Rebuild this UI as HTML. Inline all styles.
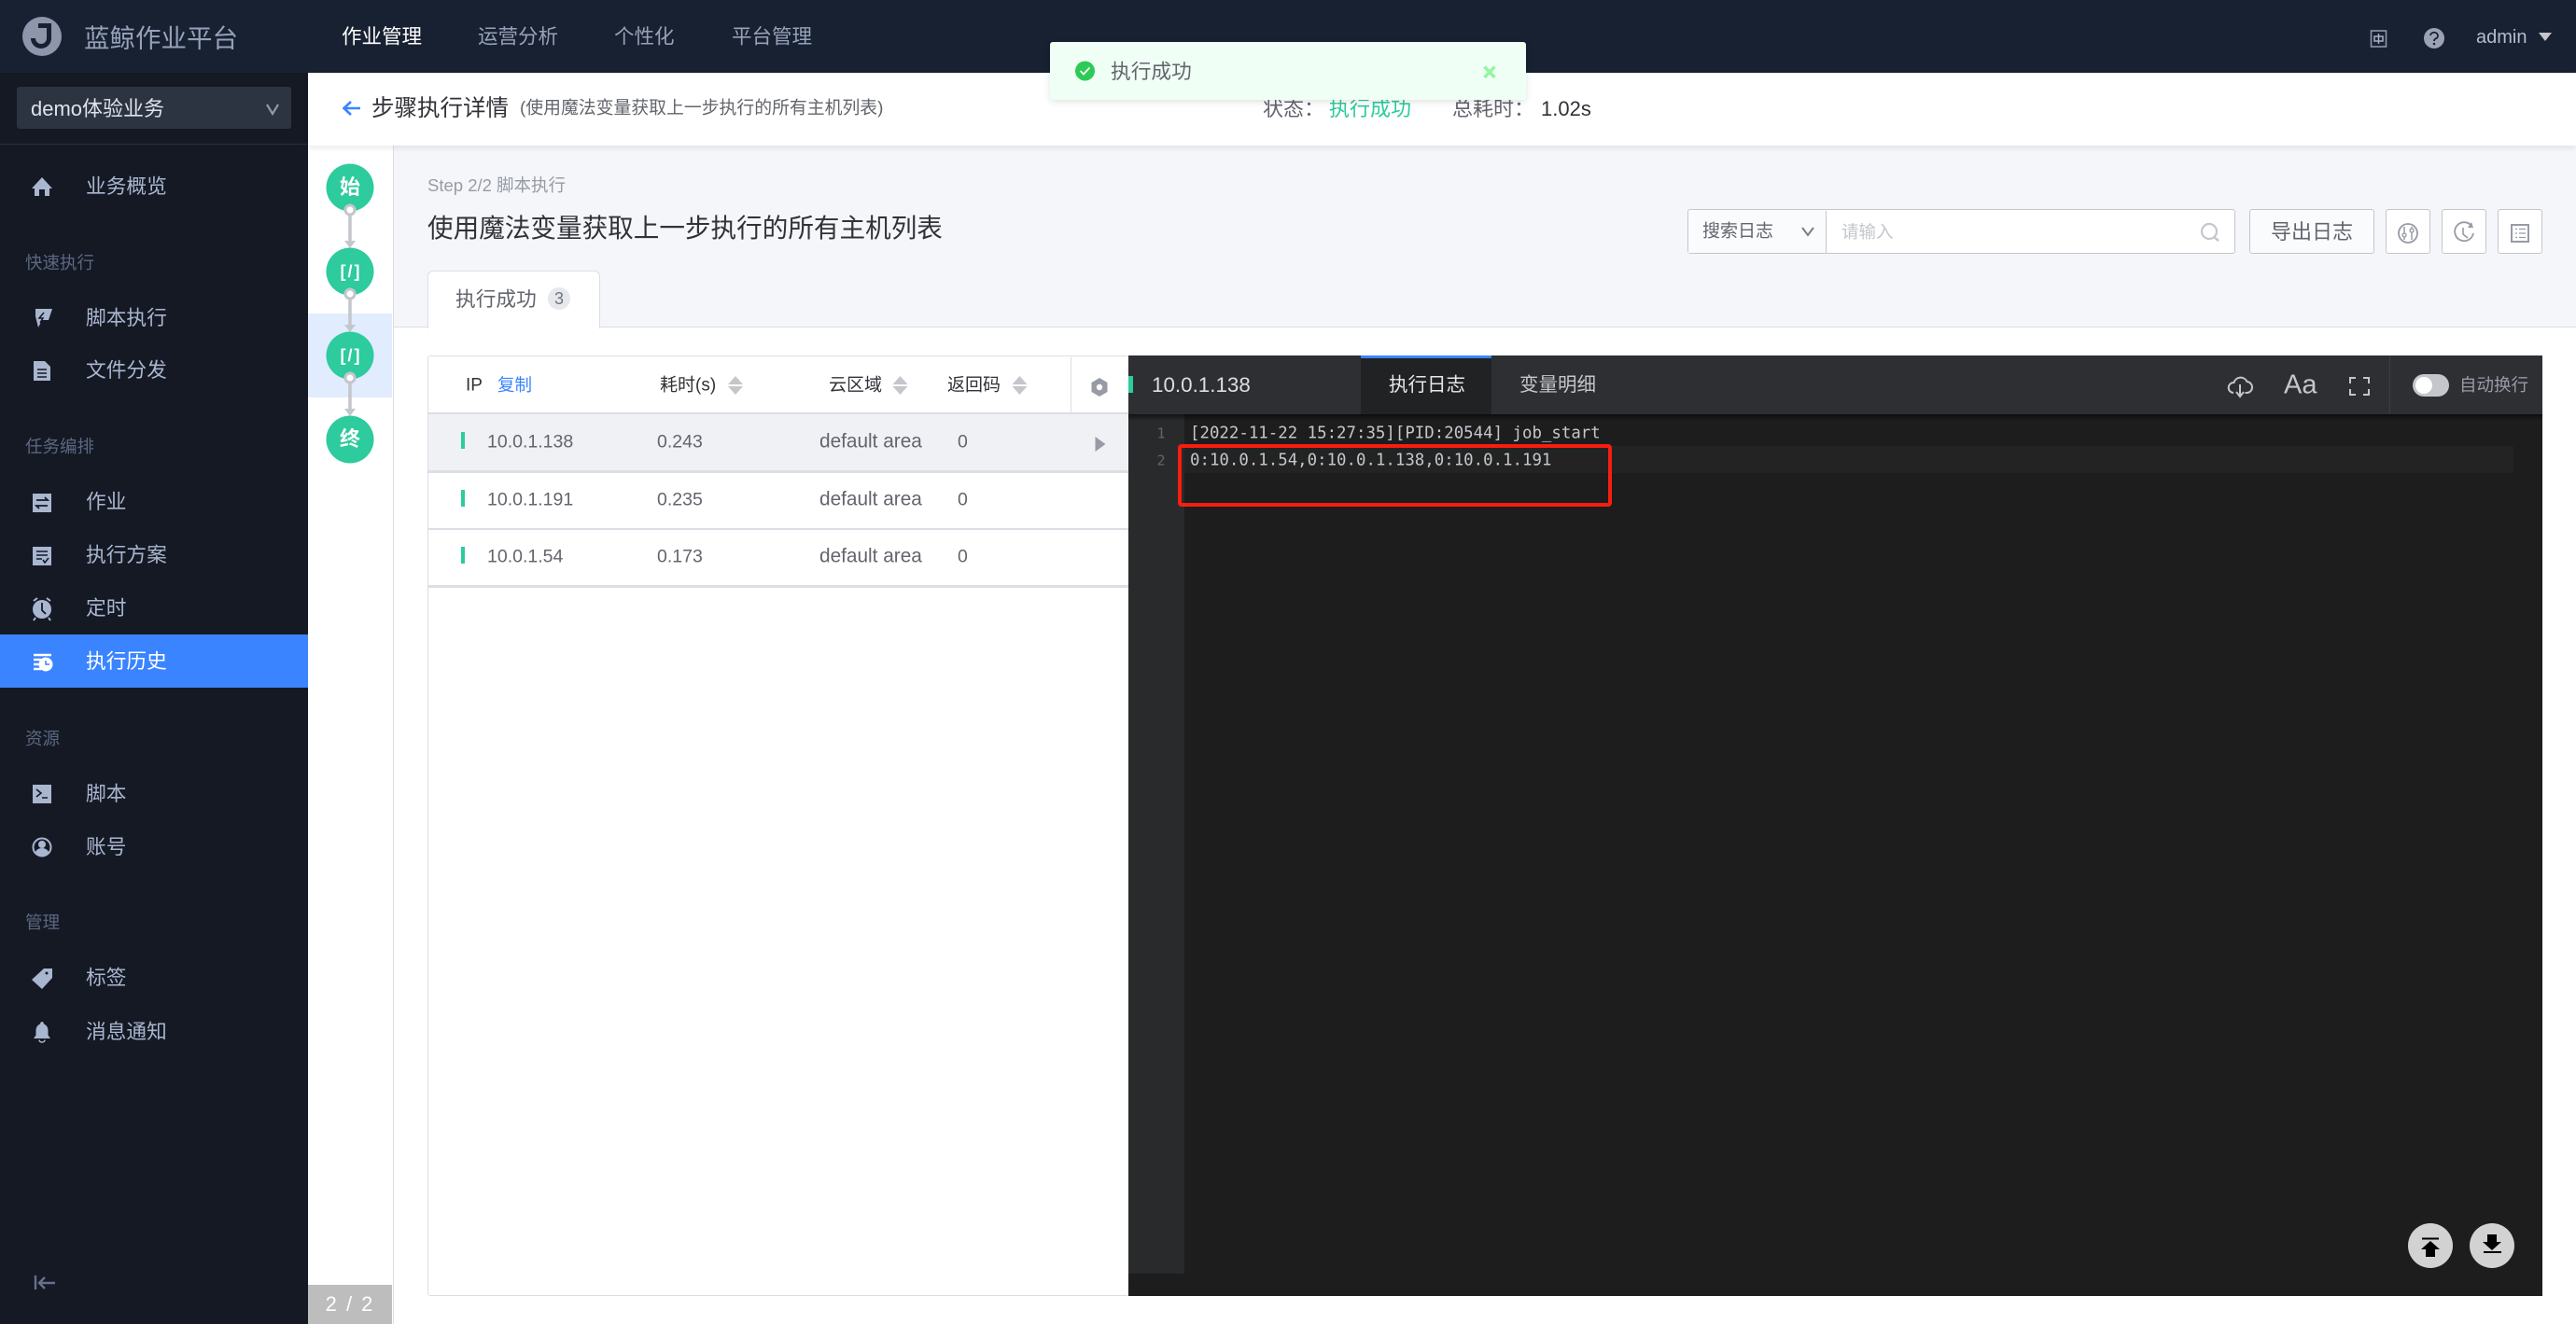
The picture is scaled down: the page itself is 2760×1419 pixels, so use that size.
<!DOCTYPE html>
<html lang="zh">
<head>
<meta charset="utf-8">
<title>蓝鲸作业平台</title>
<style>
html,body{margin:0;padding:0;width:2760px;height:1419px;overflow:hidden;background:#fff}
body{position:relative;font-family:"Liberation Sans","Noto Sans CJK SC",sans-serif;color:#63656e}
.b{position:absolute;box-sizing:border-box}
.t{position:absolute;white-space:nowrap;line-height:1;transform:translateY(calc(-50% + 1px))}
.s{font-size:21.7px;color:#a9b6cf;left:92px}
.l{font-size:18.5px;color:#5b6782;left:27px}
.n{font-size:21.5px;color:#96a2b9}
.h{font-size:19px;color:#313238}
.c{font-size:19.5px;color:#63656e}
.d{font-size:20.8px;color:#63656e;left:878px}
.m{font-family:"DejaVu Sans Mono","Liberation Mono",monospace;font-size:17.4px;color:#c4c6cc}
.o{left:349.5px;width:51px;text-align:center;color:#fff;font-weight:700;font-size:22px}
.k{font-size:18px;letter-spacing:2px;text-indent:2px}
svg{position:absolute;left:0;top:0}
</style>
</head>
<body>
<!-- top bar -->
<div class="b" style="left:0;top:0;width:2760px;height:78px;background:#182132"></div>
<div class="t" style="left:90px;top:40px;font-size:27.5px;color:#96a2b9">蓝鲸作业平台</div>
<div class="t n" style="left:366px;top:39px;color:#fff">作业管理</div>
<div class="t n" style="left:512px;top:39px">运营分析</div>
<div class="t n" style="left:658px;top:39px">个性化</div>
<div class="t n" style="left:784px;top:39px">平台管理</div>
<div class="t" style="left:2653px;top:39px;font-size:20px;color:#b4bdcc">admin</div>

<!-- sidebar -->
<div class="b" style="left:0;top:78px;width:330px;height:1341px;background:#151924"></div>
<div class="b" style="left:18px;top:93px;width:294px;height:45px;background:#2d3441;border-radius:3px"></div>
<div class="b" style="left:0;top:154px;width:330px;height:1px;background:#2a303c"></div>
<div class="t" style="left:33px;top:116px;font-size:22px;color:#dfe3ec">demo体验业务</div>
<div class="b" style="left:0;top:680px;width:330px;height:57px;background:#3a84ff"></div>
<div class="t s" style="top:199px">业务概览</div>
<div class="t l" style="top:281px">快速执行</div>
<div class="t s" style="top:340px">脚本执行</div>
<div class="t s" style="top:396px">文件分发</div>
<div class="t l" style="top:478px">任务编排</div>
<div class="t s" style="top:537px">作业</div>
<div class="t s" style="top:594px">执行方案</div>
<div class="t s" style="top:651px">定时</div>
<div class="t s" style="top:708px;color:#fff">执行历史</div>
<div class="t l" style="top:791px">资源</div>
<div class="t s" style="top:850px">脚本</div>
<div class="t s" style="top:907px">账号</div>
<div class="t l" style="top:988px">管理</div>
<div class="t s" style="top:1047px">标签</div>
<div class="t s" style="top:1105px">消息通知</div>

<!-- main bg -->
<div class="b" style="left:422px;top:156px;width:2338px;height:194px;background:#f5f6fa"></div>
<div class="b" style="left:422px;top:350px;width:2338px;height:1px;background:#dcdee5"></div>
<div class="b" style="left:421px;top:156px;width:1px;height:1263px;background:#dcdee5"></div>
<div class="b" style="left:330px;top:336px;width:90px;height:90px;background:#e1ecff"></div>
<div class="b" style="left:330px;top:1377px;width:90px;height:42px;background:#bdbdbd"></div>
<div class="t" style="left:330px;width:90px;text-align:center;top:1397px;font-size:22px;letter-spacing:2px;color:#fff">2 / 2</div>

<!-- sub header -->
<div class="b" style="left:330px;top:78px;width:2430px;height:78px;background:#fff;box-shadow:0 3px 6px rgba(0,0,0,.08)"></div>
<div class="t" style="left:398px;top:116px;font-size:24.5px;color:#313238">步骤执行详情</div>
<div class="t" style="left:557px;top:115px;font-size:18.85px;color:#63656e">(使用魔法变量获取上一步执行的所有主机列表)</div>
<div class="t" style="left:1353px;top:116px;font-size:22px;color:#63656e">状态：</div>
<div class="t" style="left:1424px;top:116px;font-size:22px;color:#2dcb9d">执行成功</div>
<div class="t" style="left:1556px;top:116px;font-size:22px;color:#63656e">总耗时：</div>
<div class="t" style="left:1651px;top:116px;font-size:22px;color:#313238">1.02s</div>

<!-- title area -->
<div class="t" style="left:458px;top:198px;font-size:18.5px;color:#979ba5">Step 2/2 脚本执行</div>
<div class="t" style="left:458px;top:244px;font-size:27.6px;color:#313238">使用魔法变量获取上一步执行的所有主机列表</div>
<div class="b" style="left:458px;top:290px;width:185px;height:62px;background:#fff;border:1px solid #dcdee5;border-bottom:0;border-radius:6px 6px 0 0"></div>
<div class="t" style="left:488px;top:320px;font-size:21.7px;color:#63656e">执行成功</div>
<div class="b" style="left:587px;top:308px;width:24px;height:24px;border-radius:12px;background:#e6e8ee"></div>
<div class="t" style="left:587px;width:24px;text-align:center;top:319px;font-size:18px;color:#707480">3</div>

<!-- search + buttons -->
<div class="b" style="left:1808px;top:224px;width:587px;height:48px;background:#fff;border:1.5px solid #c4c6cc;border-radius:3px"></div>
<div class="b" style="left:1809px;top:225.5px;width:148px;height:45px;background:#fafbfd;border-right:1.5px solid #c4c6cc"></div>
<div class="t" style="left:1824px;top:247px;font-size:19px;color:#63656e">搜索日志</div>
<div class="t" style="left:1973px;top:248px;font-size:18.5px;color:#c4c6cc">请输入</div>
<div class="b" style="left:2410px;top:224px;width:134px;height:48px;background:#fafbfd;border:1.5px solid #c4c6cc;border-radius:3px"></div>
<div class="t" style="left:2433px;top:248px;font-size:22px;color:#63656e">导出日志</div>
<div class="b" style="left:2556px;top:224px;width:48px;height:48px;background:#fff;border:1.5px solid #c4c6cc;border-radius:3px"></div>
<div class="b" style="left:2616px;top:224px;width:48px;height:48px;background:#fff;border:1.5px solid #c4c6cc;border-radius:3px"></div>
<div class="b" style="left:2676px;top:224px;width:48px;height:48px;background:#fff;border:1.5px solid #c4c6cc;border-radius:3px"></div>

<!-- table -->
<div class="b" style="left:458px;top:381px;width:752px;height:1008px;background:#fff;border:1.5px solid #dcdee5;border-radius:3px"></div>
<div class="b" style="left:459px;top:443px;width:750px;height:62px;background:#f0f1f5"></div>
<div class="b" style="left:459px;top:442px;width:750px;height:1.5px;background:#dcdee5"></div>
<div class="b" style="left:459px;top:504px;width:750px;height:2.5px;background:#dcdee5"></div>
<div class="b" style="left:459px;top:566px;width:750px;height:1.5px;background:#dcdee5"></div>
<div class="b" style="left:459px;top:627px;width:750px;height:2.5px;background:#dcdee5"></div>
<div class="b" style="left:1147px;top:383px;width:1px;height:60px;background:#dcdee5"></div>
<div class="t h" style="left:499px;top:412px">IP</div>
<div class="t" style="left:533px;top:412px;font-size:18.5px;color:#3a84ff">复制</div>
<div class="t h" style="left:707px;top:412px">耗时(s)</div>
<div class="t h" style="left:888px;top:412px">云区域</div>
<div class="t h" style="left:1015px;top:412px">返回码</div>
<div class="b" style="left:494px;top:463px;width:4px;height:18px;background:#2dcb9d"></div>
<div class="b" style="left:494px;top:525px;width:4px;height:18px;background:#2dcb9d"></div>
<div class="b" style="left:494px;top:586px;width:4px;height:18px;background:#2dcb9d"></div>
<div class="t c" style="left:522px;top:473px">10.0.1.138</div>
<div class="t c" style="left:704px;top:473px">0.243</div>
<div class="t d" style="top:473px">default area</div>
<div class="t c" style="left:1026px;top:473px">0</div>
<div class="t c" style="left:522px;top:535px">10.0.1.191</div>
<div class="t c" style="left:704px;top:535px">0.235</div>
<div class="t d" style="top:535px">default area</div>
<div class="t c" style="left:1026px;top:535px">0</div>
<div class="t c" style="left:522px;top:596px">10.0.1.54</div>
<div class="t c" style="left:704px;top:596px">0.173</div>
<div class="t d" style="top:596px">default area</div>
<div class="t c" style="left:1026px;top:596px">0</div>

<!-- log panel -->
<div class="b" style="left:1209px;top:381px;width:1515px;height:1008px;background:#1d1d1d"></div>
<div class="b" style="left:1209px;top:444px;width:60px;height:921px;background:#292a2b"></div>
<div class="b" style="left:1269px;top:478px;width:1424px;height:29px;background:#232323"></div>
<div class="b" style="left:1209px;top:381px;width:1515px;height:63px;background:#2e2f33"></div>
<div class="b" style="left:1209px;top:444px;width:1515px;height:7px;background:linear-gradient(rgba(0,0,0,.55),rgba(0,0,0,0))"></div>
<div class="b" style="left:1209px;top:403px;width:5px;height:18px;background:#2dcb9d"></div>
<div class="b" style="left:1458px;top:381px;width:140px;height:63px;background:#212224;border-top:3px solid #3a84ff"></div>
<div class="b" style="left:2560px;top:381px;width:1px;height:63px;background:#3d3e42"></div>
<div class="t" style="left:1234px;top:412px;font-size:22.4px;color:#dcdee5">10.0.1.138</div>
<div class="t" style="left:1488px;top:412px;font-size:20.5px;color:#e8e8e8">执行日志</div>
<div class="t" style="left:1628px;top:412px;font-size:20.5px;color:#c4c6cc">变量明细</div>
<div class="t" style="left:2447px;top:412px;font-size:29px;color:#c4c6cc">Aa</div>
<div class="b" style="left:2585px;top:401px;width:39px;height:24px;border-radius:12px;background:#c4c6cc"></div>
<div class="b" style="left:2588px;top:404px;width:18px;height:18px;border-radius:9px;background:#fff"></div>
<div class="t" style="left:2635px;top:412px;font-size:18.5px;color:#979ba5">自动换行</div>
<div class="t m" style="left:1239px;width:10px;text-align:center;top:464px;color:#63656e;font-size:15px">1</div>
<div class="t m" style="left:1239px;width:10px;text-align:center;top:493px;color:#63656e;font-size:15px">2</div>
<div class="t m" style="left:1275px;top:464px">[2022-11-22 15:27:35][PID:20544] job_start</div>
<div class="t m" style="left:1275px;top:493px">0:10.0.1.54,0:10.0.1.138,0:10.0.1.191</div>
<div class="b" style="left:1262px;top:476px;width:465px;height:67px;border:4px solid #f81e0f;border-radius:4px"></div>

<!-- vector icons -->
<svg width="2760" height="1419" viewBox="0 0 2760 1419" fill="none">
  <!-- logo -->
  <circle cx="45" cy="39" r="21" fill="#8d96ab"/>
  <path d="M41 27.500H52.500V41a8.500 8.500 0 0 1-17 0" stroke="#182132" stroke-width="5"/>
  <!-- header right -->
  <rect x="2540.500" y="33" width="16" height="17" stroke="#8a97ad" stroke-width="1.600"/>
  <path d="M2544 39h9v5h-9zM2548.500 36v11" stroke="#a7b2c6" stroke-width="1.500"/>
  <circle cx="2608" cy="41" r="11" fill="#9aa2b3"/>
  <path d="M2604 38a4 3.500 0 1 1 5.500 3.500c-1 .6-1.500 1.200-1.500 2.500" stroke="#182132" stroke-width="1.800"/>
  <circle cx="2608" cy="47" r="1.300" fill="#182132"/>
  <path d="M2720 35H2734L2727 44Z" fill="#c4c6cc"/>
  <!-- select chevron -->
  <path d="M286 112L292 122L298 112" stroke="#8f98a9" stroke-width="2.200"/>
  <!-- sidebar icons -->
  <path d="M45 190L56 202H53V210H48V203H42V210H37V202H34Z" fill="#a9b6cf"/>
  <path d="M38 331H56L52 343H45L41 351L38 339Z" fill="#a9b6cf"/>
  <path d="M47 335L42 341H46L43 346" stroke="#151924" stroke-width="1.500"/>
  <path d="M36 387H48L54 393V408H36Z" fill="#a9b6cf"/>
  <path d="M40 396H50M40 400H50M40 404H50" stroke="#151924" stroke-width="1.600"/>
  <rect x="35" y="529" width="20" height="20" fill="#a9b6cf"/>
  <path d="M39 536H51L48 533M51 542H39L42 545" stroke="#151924" stroke-width="1.800"/>
  <rect x="35" y="586" width="20" height="20" fill="#a9b6cf"/>
  <path d="M39 591H51M39 595H51M39 599H45M46 600L48 603L52 598" stroke="#151924" stroke-width="1.600"/>
  <circle cx="45" cy="653" r="10" fill="#a9b6cf"/>
  <path d="M36 644l4-3M54 644l-4-3M38 662l-2 3M52 662l2 3" stroke="#a9b6cf" stroke-width="2"/>
  <path d="M45 646V654L49 658" stroke="#151924" stroke-width="1.800"/>
  <path d="M36 702H55M36 707H44M36 712H43M36 717H44" stroke="#fff" stroke-width="2.500"/>
  <circle cx="49" cy="712" r="7.500" fill="#fff"/>
  <path d="M49 708V712H53" stroke="#3a84ff" stroke-width="1.500"/>
  <rect x="35" y="841" width="20" height="20" fill="#a9b6cf"/>
  <path d="M39 846L44 850L39 854M45 855H51" stroke="#151924" stroke-width="1.600"/>
  <circle cx="45" cy="908" r="9.500" stroke="#a9b6cf" stroke-width="2"/>
  <circle cx="45" cy="905" r="4" fill="#a9b6cf"/>
  <path d="M38 914a7 5 0 0 1 14 0a9.500 9.500 0 0 1-14 0Z" fill="#a9b6cf"/>
  <path fill-rule="evenodd" d="M34 1050L47 1038H56V1048L45 1060Z" fill="#a9b6cf"/>
  <circle cx="50" cy="1043" r="1.500" fill="#151924"/>
  <path d="M45 1095c1 0 2 1 2 2.500c3 1 4.500 4 4.500 7v5l2.500 3.500H36l2.500-3.500v-5c0-3 1.500-6 4.500-7c0-1.500 1-2.500 2-2.500Z" fill="#a9b6cf"/>
  <path d="M42 1114.500a3 2.500 0 0 0 6 0" stroke="#a9b6cf" stroke-width="1.500"/>
  <path d="M38 1367V1382M59 1375H42M48 1369L42 1375L48 1381" stroke="#66718c" stroke-width="2.400"/>
  <!-- back arrow -->
  <path d="M386 116H369M376 109L368.500 116L376 123" stroke="#3a84ff" stroke-width="2.600"/>
  <!-- step flow -->
  <g fill="#2dcb9d">
    <circle cx="375" cy="201" r="25.500"/><circle cx="375" cy="291" r="25.500"/><circle cx="375" cy="381" r="25.500"/><circle cx="375" cy="471" r="25.500"/>
  </g>
  <g stroke="#c4c6cc" stroke-width="3.500">
    <path d="M375 230V258M375 320V348M375 410V438"/>
  </g>
  <g fill="#c4c6cc">
    <path d="M369 258H381L375 266ZM369 348H381L375 356ZM369 438H381L375 446Z"/>
  </g>
  <g fill="#fff" stroke="#c4c6cc" stroke-width="3">
    <circle cx="375" cy="225" r="5"/><circle cx="375" cy="315" r="5"/><circle cx="375" cy="405" r="5"/>
  </g>
  <!-- search select -->
  <path d="M1931 244L1937 252L1943 244" stroke="#7a7d87" stroke-width="2"/>
  <circle cx="2367" cy="248" r="8" stroke="#c4c6cc" stroke-width="2.200"/>
  <path d="M2372 254L2377 258" stroke="#c4c6cc" stroke-width="2.500"/>
  <!-- btn icons -->
  <circle cx="2580" cy="250" r="10" stroke="#979ba5" stroke-width="1.800"/>
  <path d="M2576 243V257M2584 243V257" stroke="#979ba5" stroke-width="1.500"/>
  <circle cx="2576" cy="252" r="2" fill="#fff" stroke="#979ba5" stroke-width="1.400"/>
  <circle cx="2584" cy="247" r="2" fill="#fff" stroke="#979ba5" stroke-width="1.400"/>
  <path d="M2648 242A10 10 0 1 0 2650 250" stroke="#979ba5" stroke-width="1.800"/>
  <path d="M2648 238L2650 244L2644 244Z" fill="#979ba5"/>
  <path d="M2639 244V251L2644 255" stroke="#979ba5" stroke-width="1.600"/>
  <rect x="2691" y="241" width="18" height="18" stroke="#979ba5" stroke-width="2"/>
  <path d="M2695 245.500h2M2699 245.500h7M2695 250h2M2699 250h7M2695 254.500h2M2699 254.500h7" stroke="#979ba5" stroke-width="1.300"/>
  <!-- sort icons -->
  <g fill="#c4c6cc">
    <path d="M780 412L788 403L796 412ZM780 414H796L788 423Z"/>
    <path d="M956.500 412L964.500 403L972.500 412ZM956.500 414H972.500L964.500 423Z"/>
    <path d="M1084.500 412L1092.500 403L1100.500 412ZM1084.500 414H1100.500L1092.500 423Z"/>
  </g>
  <!-- gear -->
  <path d="M1178 405L1186.500 410V420L1178 425L1169.500 420V410Z" fill="#979ba5"/>
  <circle cx="1178" cy="415" r="3.200" fill="#fff"/>
  <!-- play triangle -->
  <path d="M1173.500 468L1184.500 476L1173.500 484Z" fill="#979ba5"/>
  <!-- log head icons -->
  <path d="M2393 421a5.500 5.500 0 0 1 .5-11a7.500 7.500 0 0 1 14-1a6 6 0 0 1-1 12h-1" stroke="#c4c6cc" stroke-width="2"/>
  <path d="M2400 412V424M2396 420L2400 425L2404 420" stroke="#c4c6cc" stroke-width="2"/>
  <path d="M2524 405H2518V411M2532 405H2538V411M2524 423H2518V417M2532 423H2538V417" stroke="#c4c6cc" stroke-width="2"/>
  <!-- scroll buttons -->
  <circle cx="2604" cy="1335" r="24" fill="#d2d2d2"/>
  <circle cx="2670" cy="1335" r="24" fill="#d2d2d2"/>
  <path d="M2595 1327.500H2613" stroke="#000" stroke-width="2"/>
  <path d="M2604 1330L2614 1339H2609V1347H2599V1339H2594Z" fill="#000"/>
  <path d="M2661 1342H2680" stroke="#000" stroke-width="2"/>
  <path d="M2665 1323H2675V1331H2680L2670 1340L2660 1331H2665Z" fill="#000"/>
</svg>

<!-- step labels -->
<div class="t o" style="top:200px">始</div>
<div class="t o k" style="top:290px">[/]</div>
<div class="t o k" style="top:380px">[/]</div>
<div class="t o" style="top:470px">终</div>

<!-- toast -->
<div class="b" style="left:1125px;top:45px;width:510px;height:62px;background:#f0fff5;border-radius:3px;box-shadow:0 2px 8px rgba(0,0,0,.12)"></div>
<div class="t" style="left:1190px;top:76px;font-size:21.7px;color:#63656e">执行成功</div>
<svg width="2760" height="1419" viewBox="0 0 2760 1419" fill="none">
  <circle cx="1162.500" cy="76" r="10.500" fill="#2dcb56"/>
  <path d="M1157.500 76L1161 79.500L1167.500 72.500" stroke="#fff" stroke-width="1.800"/>
  <path d="M1590.500 71.500L1601.500 83M1601.500 71.500L1590.500 83" stroke="#94f5a4" stroke-width="3.500"/>
</svg>
</body>
</html>
